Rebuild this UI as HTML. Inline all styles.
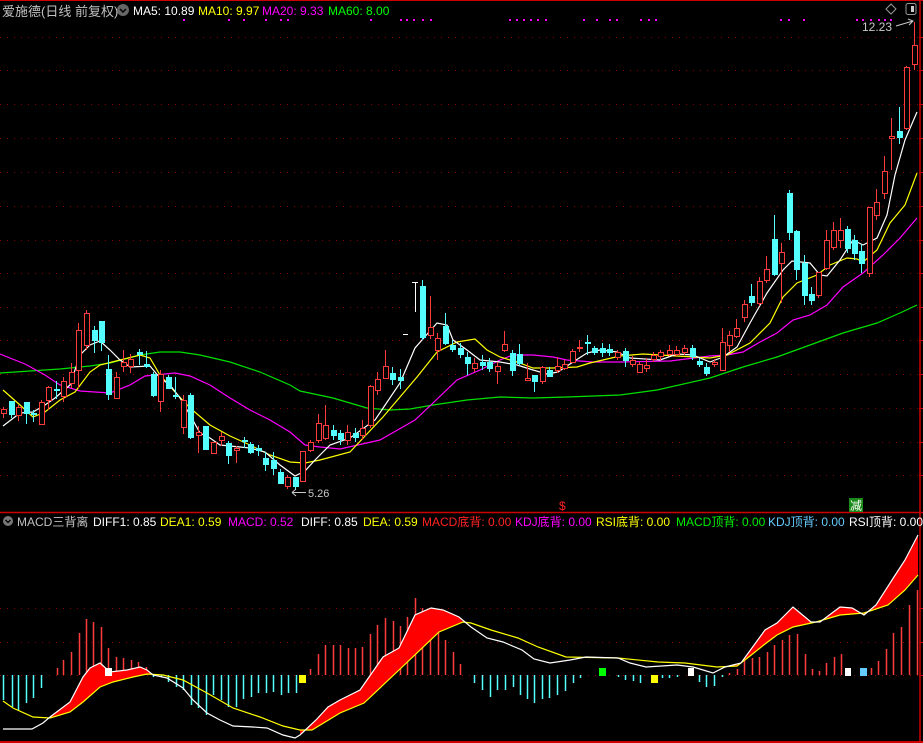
<!DOCTYPE html>
<html><head><meta charset="utf-8"><style>
html,body{margin:0;padding:0;background:#000;width:923px;height:743px;overflow:hidden}
svg{display:block}
text{font-family:"Liberation Sans","Noto Sans CJK SC",sans-serif}
</style></head><body>
<svg id="s" width="923" height="743" xmlns="http://www.w3.org/2000/svg"></svg>
<script>
var o='';
function L(x1,y1,x2,y2,c,w,d){o+='<line x1="'+x1+'" y1="'+y1+'" x2="'+x2+'" y2="'+y2+'" stroke="'+c+'" stroke-width="'+(w||1)+'"'+(d?' stroke-dasharray="'+d+'"':'')+'/>';}
function P(pts,c){o+='<polyline fill="none" stroke="'+c+'" stroke-width="1.2" points="'+pts.map(function(p){return p.join(',')}).join(' ')+'"/>';}
function T(x,y,s,c,fs){o+='<text x="'+x+'" y="'+y+'" fill="'+c+'" font-size="'+(fs||12)+'">'+s+'</text>';}
o+='<rect width="923" height="743" fill="#000"/>';
[37,70,104,138,172,206,240,273,307,340,374,408,442,475].forEach(function(y){L(0,y+.5,918,y+.5,'#8b0000',1,'1 6');L(919,y+.5,923,y+.5,'#c00',1);});
[608,642,675].forEach(function(y){L(0,y+.5,918,y+.5,'#8b0000',1,'1 6');L(919,y+.5,923,y+.5,'#c00',1);});
L(0,0.5,923,0.5,'#c00',1);L(0,512.5,923,512.5,'#c00',1.5);L(0,742,923,742,'#c00',2);L(920,0,920,743,'#c00',1.5);
[183,228,243,265,280,287,370,400,406,413,422,430,509,516,523,530,537,545,583,596,609,616,640,648,655,780,788,803,856,862,870,878,884,890].forEach(function(x){o+='<rect x="'+x+'" y="19" width="2" height="2" fill="#f0f"/>';});
P([[0,373],[30,371],[60,369],[90,366],[110,363],[140,355],[160,352],[180,352],[200,355],[230,362],[260,372],[290,385],[300,391],[333,398],[367,408],[390,410],[410,409],[433,405],[467,400],[500,397],[533,398],[567,397],[620,395],[657,390],[710,378],[743,367],[777,357],[810,345],[843,333],[877,323],[900,313],[917,305]],'#00e000');
P([[0,354],[25,364],[45,375],[60,385],[80,391],[110,393],[130,385],[145,376],[175,373],[190,376],[210,385],[230,398],[250,410],[270,420],[290,432],[305,445],[320,447],[340,449],[380,440],[415,420],[433,403],[457,380],[480,370],[500,360],[513,355],[533,355],[553,357],[567,360],[593,362],[620,362],[670,361],[710,356],[727,355],[743,352],[760,342],[777,333],[793,320],[810,315],[827,305],[843,287],[863,273],[883,255],[900,238],[917,218]],'#f0f');
P([[3,390],[20,405],[33,417],[45,412],[60,400],[75,392],[90,372],[100,365],[120,360],[140,355],[150,358],[160,375],[175,392],[190,408],[210,425],[230,436],[250,445],[270,455],[290,462],[305,463],[320,460],[350,452],[383,417],[417,377],[437,352],[457,342],[475,339],[487,350],[500,357],[517,362],[533,368],[553,368],[577,367],[590,363],[620,356],[643,354],[677,356],[710,358],[727,355],[750,343],[770,323],[783,297],[797,283],[817,275],[830,265],[847,258],[857,259],[863,262],[877,250],[890,223],[905,205],[917,173]],'#ff0');
P([[3,426],[20,413],[33,412],[45,405],[55,398],[70,385],[80,355],[90,345],[100,341],[110,350],[120,360],[130,367],[150,366],[160,378],[170,385],[180,398],[190,415],[200,433],[210,438],[220,445],[240,447],[250,448],[265,452],[280,465],[295,476],[305,471],[315,460],[330,445],[350,438],[375,420],[400,383],[415,348],[437,323],[447,325],[453,340],[467,350],[480,360],[500,362],[517,365],[533,370],[547,374],[558,372],[573,362],[587,353],[600,350],[617,352],[630,358],[660,360],[677,354],[693,355],[710,362],[723,357],[737,347],[750,323],[767,293],[783,270],[792,261],[810,263],[820,275],[827,276],[840,260],[853,240],[863,245],[877,238],[887,215],[895,175],[905,140],[917,112]],'#fff');
var C=[[3,409,413,407,418,'r'],[11,401,415,401,418,'c'],[18,407,415,405,421,'r'],[26,402,414,402,424,'c'],[33,413,415,410,422,'c'],[41,402,424,400,424,'r'],[48,387,400,386,410,'r'],[56,389,391,381,399,'c'],[63,381,396,377,402,'r'],[71,372,383,363,388,'r'],[78,330,370,323,388,'r'],[86,313,345,310,350,'r'],[94,330,341,326,353,'c'],[101,321,343,321,351,'c'],[108,369,395,355,400,'c'],[116,377,398,372,398,'r'],[123,362,366,350,372,'r'],[130,359,366,354,373,'r'],[139,352,355,349,365,'c'],[146,364,367,351,368,'c'],[153,374,396,372,397,'c'],[160,374,401,370,412,'r'],[168,377,389,375,389,'c'],[175,395,397,377,399,'c'],[183,400,427,395,434,'r'],[190,395,438,393,439,'c'],[198,432,435,426,453,'r'],[205,426,450,426,450,'c'],[213,442,453,442,453,'r'],[221,436,440,432,446,'r'],[228,443,456,441,464,'c'],[236,448,450,446,463,'r'],[244,440,442,437,448,'c'],[250,444,453,442,454,'c'],[258,448,451,445,456,'c'],[265,458,465,452,471,'c'],[273,460,469,452,475,'c'],[280,472,484,469,484,'c'],[287,477,486,475,489,'r'],[295,477,487,477,490,'c'],[302,451,481,451,482,'r'],[310,442,450,440,452,'r'],[318,423,440,414,443,'r'],[325,425,438,405,440,'r'],[333,430,436,425,440,'c'],[340,433,440,430,445,'c'],[347,432,440,425,445,'r'],[355,433,438,428,442,'c'],[362,428,435,420,440,'r'],[370,386,425,385,428,'r'],[377,379,390,372,395,'r'],[385,366,378,350,378,'r'],[392,373,380,367,385,'c'],[400,377,381,369,389,'c'],[422,286,338,280,340,'c'],[430,327,335,296,339,'r'],[437,338,350,333,360,'r'],[445,326,344,313,345,'c'],[452,345,350,340,352,'c'],[460,348,355,343,358,'c'],[467,357,364,352,375,'c'],[474,363,368,358,372,'r'],[482,362,366,355,370,'c'],[489,362,369,358,372,'c'],[497,366,371,362,384,'r'],[504,344,350,331,352,'r'],[512,353,371,350,376,'c'],[519,354,364,344,366,'c'],[527,378,380,363,380,'r'],[534,375,382,375,392,'c'],[542,367,381,366,384,'r'],[549,370,377,367,377,'c'],[557,366,370,357,373,'r'],[564,364,368,360,370,'r'],[572,351,362,349,362,'r'],[579,347,348,340,352,'r'],[587,342,344,335,355,'c'],[594,348,353,346,355,'c'],[602,348,353,343,357,'c'],[609,349,353,344,356,'c'],[617,352,357,350,360,'r'],[625,351,361,348,367,'c'],[632,360,364,356,367,'r'],[639,364,372,362,373,'r'],[646,365,368,358,372,'r'],[653,355,359,352,362,'r'],[660,352,356,350,360,'r'],[669,350,354,345,356,'r'],[676,350,354,346,356,'r'],[684,348,352,345,355,'r'],[692,348,357,345,360,'c'],[699,361,365,358,367,'c'],[706,367,374,363,376,'c'],[714,362,364,359,367,'r'],[722,342,370,328,370,'r'],[729,335,345,331,352,'r'],[736,328,336,319,338,'r'],[744,304,317,300,322,'r'],[751,296,303,284,306,'c'],[759,281,303,277,306,'r'],[766,269,280,256,283,'r'],[774,239,275,215,276,'c'],[781,252,263,243,303,'r'],[789,193,233,190,240,'c'],[796,231,270,230,280,'c'],[804,263,296,255,305,'c'],[811,294,301,287,305,'c'],[818,272,295,272,298,'r'],[826,240,268,230,270,'r'],[833,230,247,222,250,'r'],[840,230,240,218,248,'r'],[847,229,249,226,253,'c'],[854,240,254,235,260,'c'],[861,251,264,244,273,'c'],[869,207,273,207,277,'r'],[876,202,215,189,220,'r'],[884,171,193,156,199,'r'],[891,136,138,118,170,'r'],[899,131,138,107,144,'c'],[906,67,128,66,130,'r'],[914,45,64,22,70,'r']];
C.forEach(function(c){var x=c[0],r=c[5]=='r',col=r?'#ff3c3c':'#54ffff';
L(x+.5,c[3],x+.5,c[4],col,1);
if(r)o+='<rect x="'+(x-2)+'.5" y="'+c[1]+'.5" width="5" height="'+Math.max(1,c[2]-c[1])+'" fill="#000" stroke="'+col+'"/>';
else o+='<rect x="'+(x-2)+'" y="'+c[1]+'" width="6" height="'+Math.max(2,c[2]-c[1])+'" fill="'+col+'"/>';});
L(415.5,282,415.5,312,'#fff',1);L(412,282.5,418,282.5,'#fff',1);L(403,334.5,408,334.5,'#fff',1);
T(308,497,'5.26','#c8c8c8',11);L(292,492.5,306,492.5,'#c8c8c8',1);o+='<path d="M292 492.5 L296 489 M292 492.5 L296 496" stroke="#c8c8c8" fill="none"/>';
T(862,31,'12.23','#c8c8c8',12);o+='<path d="M896 26 L913 21 M908 19 L913 21 L909 25" stroke="#c8c8c8" fill="none"/>';
o+='<path d="M891 4 L896 9 L891 14 L886 9 Z" fill="none" stroke="#999"/><rect x="906" y="3.5" width="10" height="11" rx="2" fill="none" stroke="#999"/><rect x="911" y="6" width="3" height="6" fill="#ccc"/>';
T(2,16,'爱施德(日线 前复权)','#c0c0c0',13);
o+='<circle cx="123" cy="10" r="6" fill="#666"/><path d="M120 9 L123 12 L126 9" stroke="#000" stroke-width="1.5" fill="none"/>';
T(133,15,'MA5: 10.89','#fff');T(198,15,'MA10: 9.97','#ff0');T(262,15,'MA20: 9.33','#f0f');T(328,15,'MA60: 8.00','#0f0');
T(559,510,'$','#f22',12);
o+='<rect x="849" y="498" width="14" height="14" fill="#1a8a1a"/>';T(850,510,'减','#fff',12);
o+='<circle cx="8" cy="521" r="5" fill="#777"/><path d="M5.5 520 L8 522.5 L10.5 520" stroke="#000" stroke-width="1.3" fill="none"/>';
T(17,526,'MACD三背离','#c0c0c0');T(93,526,'DIFF1: 0.85','#fff');T(160,526,'DEA1: 0.59','#ff0');T(228,526,'MACD: 0.52','#f0f');
T(301,526,'DIFF: 0.85','#fff');T(363,526,'DEA: 0.59','#ff0');T(422,526,'MACD底背: 0.00','#f22');T(515,526,'KDJ底背: 0.00','#f0f');
T(596,526,'RSI底背: 0.00','#ff0');T(676,526,'MACD顶背: 0.00','#0e0');T(768,526,'KDJ顶背: 0.00','#6cf');T(849,526,'RSI顶背: 0.00','#fff');
var R=[[57,668],[63,660],[71,652],[79,633],[86,619],[93,622],[101,627],[108,648],[116,657],[123,658],[131,660],[138,662],[146,667],[310,669],[318,654],[325,645],[333,645],[340,645],[348,648],[355,648],[362,647],[370,634],[377,625],[385,618],[393,621],[400,626],[407,617],[415,598],[422,608],[430,640],[438,630],[445,640],[453,652],[460,664],[729,673],[737,669],[744,660],[752,658],[759,657],[767,652],[774,645],[782,640],[789,635],[797,634],[805,654],[812,669],[819,671],[826,663],[834,657],[841,654],[871,668],[878,661],[886,649],[893,633],[901,627],[909,605],[917,590]];
R.forEach(function(b){L(b[0]+.5,b[1],b[0]+.5,675,'#ff3c3c',1.5);});
var B=[[3,700],[12,707],[18,710],[26,703],[33,698],[41,688],[153,677],[161,677],[168,682],[176,687],[183,690],[191,705],[198,708],[206,715],[213,695],[221,700],[228,707],[236,707],[243,699],[251,697],[258,693],[266,693],[273,692],[281,695],[288,693],[296,693],[474,683],[482,690],[490,697],[497,690],[505,690],[513,687],[520,695],[527,699],[534,703],[542,699],[549,698],[557,695],[565,691],[573,683],[580,678],[618,677],[625,680],[633,681],[640,683],[662,678],[669,678],[677,677],[699,682],[706,687],[714,686],[722,677]];
B.forEach(function(b){L(b[0]+.5,675,b[0]+.5,b[1],'#54ffff',1.5);});
var W=[[3,729],[10,729],[32,729],[43,723],[50,717],[70,702],[83,677],[90,668],[100,663],[110,672],[127,670],[140,667],[147,670],[153,675],[167,678],[183,688],[193,700],[207,713],[220,720],[233,726],[253,727],[267,728],[283,735],[295,738],[300,735],[316,720],[328,707],[340,700],[360,690],[383,657],[399,648],[415,615],[431,608],[443,610],[459,617],[471,627],[487,638],[503,642],[522,650],[534,659],[550,663],[570,660],[586,657],[618,658],[630,663],[646,667],[677,665],[693,667],[713,673],[725,667],[741,663],[765,630],[777,623],[793,607],[811,622],[820,622],[840,607],[852,608],[864,615],[876,605],[892,580],[905,560],[918,535]];
var Y=[[3,701],[13,708],[33,717],[50,718],[70,712],[83,702],[100,687],[113,682],[133,677],[147,674],[163,675],[183,680],[207,693],[233,708],[260,717],[283,726],[300,730],[312,730],[340,713],[364,703],[399,670],[439,632],[463,622],[471,623],[491,630],[518,638],[538,647],[566,657],[618,658],[658,662],[685,663],[717,667],[737,666],[750,656],[765,644],[777,635],[793,627],[816,622],[840,615],[864,613],[888,605],[905,590],[918,575]];
function seg(a,x0,x1){return a.filter(function(p){return p[0]>=x0&&p[0]<=x1});}
function fill(x0,x1){var w=seg(W,x0,x1),y=seg(Y,x0,x1).reverse();o+='<polygon fill="#f00" points="'+w.concat(y).map(function(p){return p.join(',')}).join(' ')+'"/>';}
fill(50,153);fill(300,465);fill(722,918);
P(Y,'#ff0');P(W,'#fff');
o+='<rect x="105" y="668" width="7" height="8" fill="#fff"/><rect x="299" y="675" width="7" height="8" fill="#ff0"/><rect x="599" y="668" width="7" height="8" fill="#0f0"/><rect x="651" y="675" width="7" height="8" fill="#ff0"/><rect x="688" y="668" width="6" height="8" fill="#fff"/><rect x="845" y="668" width="6" height="8" fill="#fff"/><rect x="860" y="668" width="7" height="8" fill="#6cf"/>';
document.getElementById('s').innerHTML=o;
</script>
</body></html>
